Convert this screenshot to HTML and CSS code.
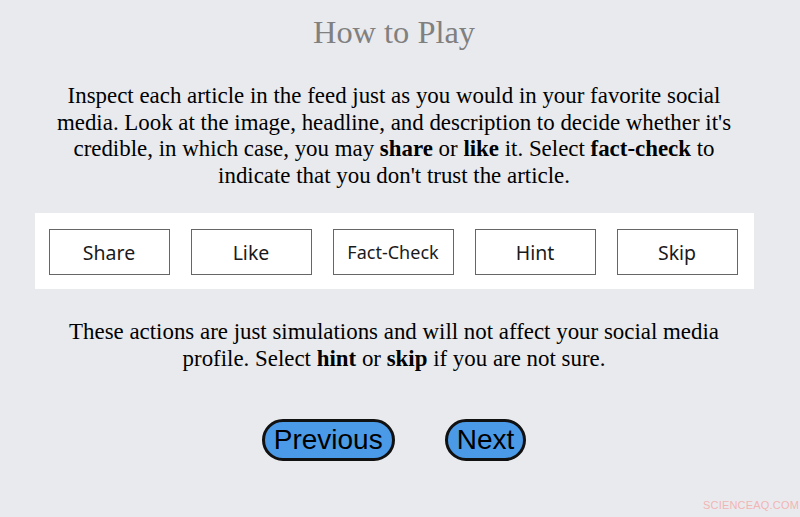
FILE: index.html
```html
<!DOCTYPE html>
<html>
<head>
<meta charset="utf-8">
<link rel="stylesheet" href="styles.css">
</head>
<body>
<div class="page">
  <h1 class="title">How to Play</h1>
  <p class="text text-intro">Inspect each article in the feed just as you would in your favorite social media. Look at the image, headline, and description to decide whether it's credible, in which case, you may <b>share</b> or <b>like</b> it. Select <b>fact-check</b> to indicate that you don't trust the article.</p>
  <div class="actions">
    <div class="action">Share</div>
    <div class="action">Like</div>
    <div class="action action-small">Fact-Check</div>
    <div class="action">Hint</div>
    <div class="action">Skip</div>
  </div>
  <p class="text text-note">These actions are just simulations and will not affect your social media profile. Select <b>hint</b> or <b>skip</b> if you are not sure.</p>
  <div class="nav">
    <button class="nav-btn">Previous</button>
    <button class="nav-btn">Next</button>
  </div>
</div>
<div class="watermark">SCIENCEAQ.COM</div>
</body>
</html>
```
FILE: styles.css
```css
html, body {
  margin: 0;
  padding: 0;
  background: #e9eaee;
  height: 100%;
}
body {
  position: relative;
  overflow: hidden;
}
.page {
  width: 788px;
  display: flex;
  flex-direction: column;
  align-items: center;
  font-family: "Liberation Serif", "Times New Roman", serif;
}
.title {
  margin: 13px 0 0;
  font-weight: normal;
  font-size: 32.4px;
  line-height: 38px;
  color: #808080;
}
.text {
  width: 714px;
  margin: 0;
  text-align: center;
  font-size: 22.9px;
  line-height: 26.5px;
  color: #000;
}
.text-intro {
  margin-top: 32px;
}
.actions {
  margin-top: 24px;
  width: 719px;
  box-sizing: border-box;
  padding: 16px 16px 14px 14px;
  background: #fff;
  display: flex;
  justify-content: space-between;
}
.action {
  width: 121px;
  height: 46px;
  box-sizing: border-box;
  border: 1.5px solid #666;
  display: flex;
  align-items: center;
  justify-content: center;
  font-family: "Noto Sans", "Open Sans", sans-serif;
  font-size: 19.5px;
  color: #1a1a1a;
}
.action-small {
  font-size: 18px;
}
.text-note {
  margin-top: 30px;
}
.nav {
  margin-top: 47px;
  display: flex;
  gap: 50px;
}
.nav-btn {
  height: 42px;
  padding: 0 9px;
  border: 3px solid #111;
  border-radius: 21px;
  background: #4a9ae8;
  font-family: "Liberation Sans", Arial, sans-serif;
  font-size: 28px;
  line-height: 34px;
  color: #000;
}
.watermark {
  position: absolute;
  left: 703px;
  top: 499px;
  font-family: "Liberation Sans", Arial, sans-serif;
  font-size: 11px;
  color: #f2b5b5;
  letter-spacing: 0.2px;
}
```
